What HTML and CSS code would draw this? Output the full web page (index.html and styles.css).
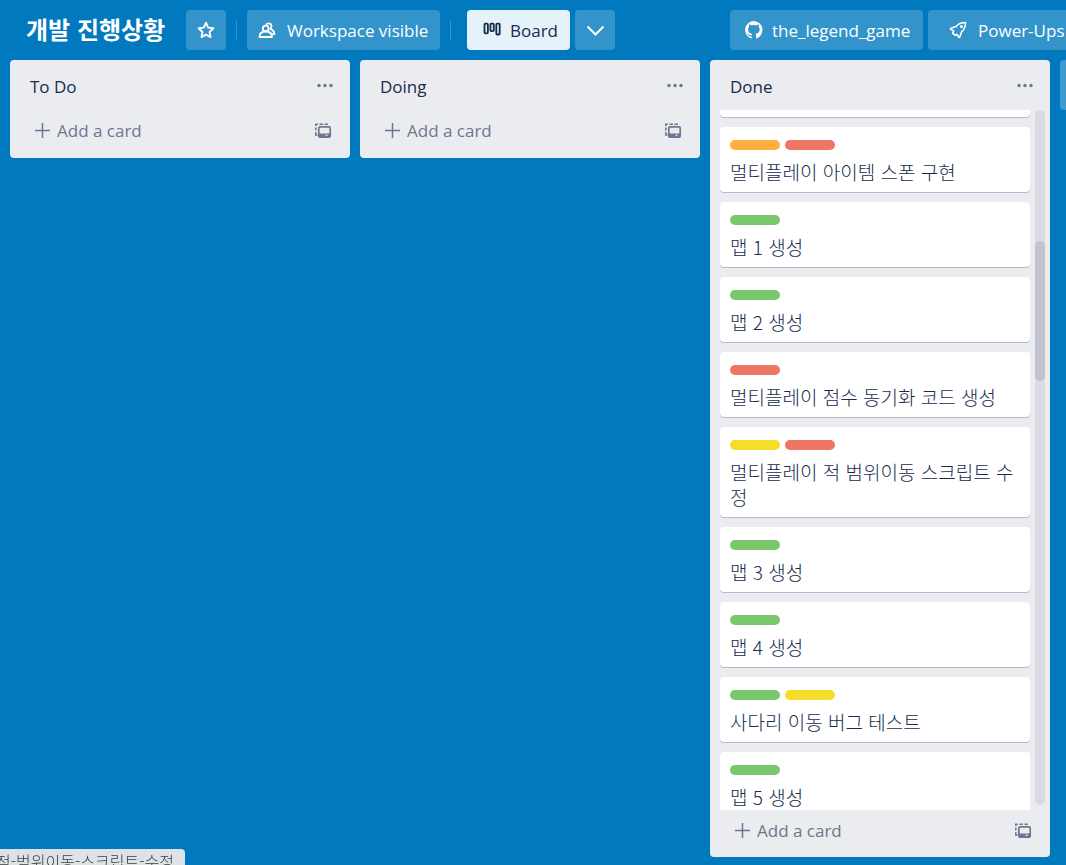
FILE: index.html
```html
<!DOCTYPE html>
<html lang="ko">
<head>
<meta charset="utf-8">
<meta name="viewport" content="width=device-width, initial-scale=1">
<title>개발 진행상황</title>
<link rel="stylesheet" href="styles.css">
</head>
<body>
<svg class="sprite" aria-hidden="true">
  <symbol id="dots" viewBox="0 0 20 20"><circle cx="4" cy="9.500" r="1.700"/><circle cx="10" cy="9.500" r="1.700"/><circle cx="16" cy="9.500" r="1.700"/></symbol>
  <symbol id="plus" viewBox="0 0 20 20"><path d="M10.500 2v15M3 9.500h15" fill="none" stroke="currentColor" stroke-width="1.500"/></symbol>
  <symbol id="template" viewBox="0 0 20 20">
    <path d="M2.800 5V3.200h2M6.500 3.200h3.500M11.500 3.200H15M2.800 6.500v3M2.800 11v3h1.700" fill="none" stroke="currentColor" stroke-width="1.500"/>
    <rect x="5.800" y="5.800" width="11.400" height="10.400" rx="1.200" fill="none" stroke="currentColor" stroke-width="1.700"/>
    <path d="M6 12.500h11V16H6z"/><path d="M12.500 14.300h2" stroke="#ebecf0" stroke-width="1.200"/>
  </symbol>
</svg>

<header class="board-header">
  <h1 class="board-title">개발 진행상황</h1>
  <button class="btn btn-icon" aria-label="Star board">
    <svg class="icon" viewBox="0 0 20 20"><path d="M10 2.700l2.200 4.900 5.200.7-3.800 3.700.9 5.100L10 14.700l-4.500 2.400.9-5.100L2.600 8.300l5.200-.7z" fill="none" stroke="currentColor" stroke-width="1.900" stroke-linejoin="round"/></svg>
  </button>
  <span class="divider"></span>
  <button class="btn btn-visibility">
    <svg class="icon" viewBox="0 0 20 20" fill="none" stroke="currentColor" stroke-width="1.800" stroke-linejoin="round"><circle cx="8.700" cy="8.500" r="2.900"/><path d="M2.500 17c0-3.300 2.400-5.500 6.200-5.500s6.200 2.200 6.200 5.500z"/><path d="M9 4.800c.6-1.100 1.600-1.500 2.500-1.500 1.800 0 3 1.300 3 2.900 0 1.200-.6 2.100-1.400 2.600 2.500.8 4.300 2.600 4.300 5.400h-2.600"/></svg>
    <span>Workspace visible</span>
  </button>
  <span class="divider"></span>
  <div class="views">
    <button class="btn btn-board">
      <svg class="icon" viewBox="0 0 20 20" fill="none" stroke="currentColor" stroke-width="1.800"><rect x="2.500" y="3.700" width="3.400" height="9.600" rx="1"/><rect x="8.400" y="3.700" width="3.400" height="7.400" rx="1"/><rect x="14.300" y="3.700" width="3.400" height="10.800" rx="1"/></svg>
      <span>Board</span>
    </button>
    <button class="btn btn-icon" aria-label="Views">
      <svg class="icon" viewBox="0 0 20 20"><path d="M2.500 6.500l8 8 8-8" fill="none" stroke="currentColor" stroke-width="2"/></svg>
    </button>
  </div>
  <div class="tools">
    <button class="btn btn-repo">
      <svg class="icon" viewBox="0 0 16 16" fill="currentColor"><path d="M8 .8a7.200 7.200 0 0 0-2.300 14c.4.100.5-.2.500-.4v-1.300c-2 .4-2.500-.9-2.500-.9-.3-.8-.8-1.100-.8-1.100-.7-.4 0-.4 0-.4.700 0 1.100.7 1.100.7.700 1.100 1.700.8 2.100.6.100-.5.300-.8.500-1-1.600-.2-3.300-.8-3.300-3.600 0-.8.300-1.400.7-1.900 0-.200-.3-.9.100-1.900 0 0 .6-.2 2 .7a7 7 0 0 1 3.600 0c1.400-.9 2-.7 2-.7.400 1 .1 1.700.1 1.900.5.500.7 1.100.7 1.900 0 2.800-1.700 3.400-3.300 3.600.3.200.5.700.5 1.300v2c0 .2.100.5.500.4A7.200 7.200 0 0 0 8 .8z"/></svg>
      <span>the_legend_game</span>
    </button>
    <button class="btn btn-power">
      <svg class="icon" viewBox="0 0 20 20" fill="none" stroke="currentColor" stroke-width="1.600" stroke-linejoin="round" stroke-linecap="round"><path d="M17.500 2.500c-4.300 0-7.200 1.200-9.400 4L3 8.200c-.7.300-.7.900-.2 1.200l2.900 1.500-1 2.200 2.200 2.200 2.200-1 1.600 2.900c.3.500.9.500 1.100-.1l1.700-5.200c2.800-2.200 4-5.100 4-9.400z"/><circle cx="13.400" cy="6.600" r=".7"/></svg>
      <span>Power-Ups</span>
    </button>
  </div>
</header>

<main class="board">
  <section class="list">
    <div class="list-head"><h2>To Do</h2><button class="ghost" aria-label="List actions"><svg class="icon"><use href="#dots"/></svg></button></div>
    <div class="list-foot"><button class="add"><svg class="icon"><use href="#plus"/></svg><span>Add a card</span></button><button class="ghost" aria-label="Create from template"><svg class="icon"><use href="#template"/></svg></button></div>
  </section>
  <section class="list">
    <div class="list-head"><h2>Doing</h2><button class="ghost" aria-label="List actions"><svg class="icon"><use href="#dots"/></svg></button></div>
    <div class="list-foot"><button class="add"><svg class="icon"><use href="#plus"/></svg><span>Add a card</span></button><button class="ghost" aria-label="Create from template"><svg class="icon"><use href="#template"/></svg></button></div>
  </section>
  <section class="list list-full">
    <div class="list-head"><h2>Done</h2><button class="ghost" aria-label="List actions"><svg class="icon"><use href="#dots"/></svg></button></div>
    <div class="list-body">
      <div class="cards">
        <article class="card card-tail"></article>
        <article class="card"><div class="labels"><i class="label orange"></i><i class="label red"></i></div><p>멀티플레이 아이템 스폰 구현</p></article>
        <article class="card"><div class="labels"><i class="label green"></i></div><p>맵 1 생성</p></article>
        <article class="card"><div class="labels"><i class="label green"></i></div><p>맵 2 생성</p></article>
        <article class="card"><div class="labels"><i class="label red"></i></div><p>멀티플레이 점수 동기화 코드 생성</p></article>
        <article class="card"><div class="labels"><i class="label yellow"></i><i class="label red"></i></div><p>멀티플레이 적 범위이동 스크립트 수정</p></article>
        <article class="card"><div class="labels"><i class="label green"></i></div><p>맵 3 생성</p></article>
        <article class="card"><div class="labels"><i class="label green"></i></div><p>맵 4 생성</p></article>
        <article class="card"><div class="labels"><i class="label green"></i><i class="label yellow"></i></div><p>사다리 이동 버그 테스트</p></article>
        <article class="card"><div class="labels"><i class="label green"></i></div><p>맵 5 생성</p></article>
      </div>
      <div class="track" aria-hidden="true"><div class="thumb"></div></div>
    </div>
    <div class="list-foot"><button class="add"><svg class="icon"><use href="#plus"/></svg><span>Add a card</span></button><button class="ghost" aria-label="Create from template"><svg class="icon"><use href="#template"/></svg></button></div>
  </section>
  <button class="add-list" aria-label="Add another list"></button>
</main>
<div class="status">적-범위이동-스크립트-수정</div>
</body>
</html>
```

FILE: styles.css
```css
* {
  box-sizing: border-box;
}

body {
  margin: 0;
  height: 100vh;
  display: flex;
  flex-direction: column;
  overflow: hidden;
  background: #0079bf;
  color: #172b4d;
  font-family: "Open Sans", "Noto Sans CJK KR", sans-serif;
  font-size: 17px;
  line-height: 25px;
}

h1, h2, p {
  margin: 0;
}

button {
  border: 0;
  padding: 0;
  background: none;
  font: inherit;
  color: inherit;
  display: flex;
  align-items: center;
  cursor: pointer;
}

.sprite {
  display: none;
}

.icon {
  width: 20px;
  height: 20px;
  flex: none;
  fill: currentColor;
}

svg.icon[fill="none"] {
  fill: none;
}

.board-header {
  flex: none;
  display: flex;
  align-items: center;
  height: 60px;
  padding-left: 26px;
  color: #fff;
  white-space: nowrap;
}

.board-title {
  width: 160px;
  flex: none;
  font-family: "Noto Sans CJK KR", sans-serif;
  font-size: 24px;
  font-weight: 700;
  line-height: 38px;
  padding-bottom: 2px;
}

.btn {
  flex: none;
  height: 40px;
  border-radius: 4px;
  background: #3394cc;
}

.btn-icon {
  width: 40px;
  justify-content: center;
}

.divider {
  flex: none;
  width: 1px;
  height: 20px;
  margin: 0 10px;
  background: #3394cc;
}

.btn-visibility {
  width: 193px;
  padding-left: 10px;
  gap: 10px;
}

.views,
.tools {
  display: flex;
  gap: 5px;
}

.views {
  margin-left: 6px;
}

.btn-board {
  width: 103px;
  padding-left: 15px;
  gap: 8px;
  background: #e6f2f9;
  color: #172b4d;
}

.tools {
  margin-left: 115px;
}

.btn-repo {
  width: 193px;
  padding-left: 14px;
  gap: 8px;
}

.btn-power {
  width: 150px;
  padding-left: 20px;
  gap: 10px;
}

.board {
  flex: 1;
  min-height: 0;
  display: flex;
  align-items: flex-start;
  gap: 10px;
  padding: 0 10px 8px;
}

.list {
  flex: none;
  width: 340px;
  max-height: 100%;
  display: flex;
  flex-direction: column;
  border-radius: 4px;
  background: #ebecf0;
}

.list-full {
  height: 100%;
}

.list-head {
  flex: none;
  display: flex;
  justify-content: space-between;
  align-items: center;
  height: 50px;
  padding: 2px 15px 0 20px;
}

.list-head h2 {
  font-size: 17px;
  font-weight: 500;
}

.ghost,
.add {
  color: #6b778c;
}

.add {
  gap: 5px;
}

.list-foot {
  flex: none;
  display: flex;
  justify-content: space-between;
  align-items: flex-start;
  height: 48px;
  padding: 8px 17px 0 22px;
}

.list-foot .ghost {
  height: 25px;
}

.list-body {
  flex: 1;
  min-height: 0;
  display: flex;
  gap: 5px;
  padding: 0 5px 0 10px;
}

.list-full .list-foot {
  height: 47px;
}

.cards {
  flex: 1;
  min-width: 0;
  overflow: hidden;
}

.card {
  min-height: 65px;
  margin-bottom: 10px;
  padding: 13px 10px 8px;
  border-radius: 4px;
  background: #fff;
  box-shadow: 0 1px 0 #b3b9c6;
}

.card-tail {
  min-height: 7px;
  height: 7px;
  padding: 0;
  border-radius: 0 0 4px 4px;
}

.card p {
  font-family: "Noto Sans CJK KR", sans-serif;
  font-size: 19px;
  font-weight: 300;
  line-height: 25px;
}

.labels {
  display: flex;
  gap: 5px;
  height: 10px;
  margin-bottom: 9px;
}

.label {
  width: 50px;
  border-radius: 5px;
}

.green { background: #7bc86c; }
.yellow { background: #f5dd29; }
.orange { background: #ffaf3f; }
.red { background: #ef7564; }

.track {
  width: 10px;
  margin-bottom: 5px;
  display: grid;
  grid-template-rows: 131fr 140fr 424fr;
  border-radius: 5px;
  background: #dadbe2;
}

.thumb {
  grid-row: 2;
  border-radius: 5px;
  background: #c1c4d0;
}

.add-list {
  flex: none;
  width: 340px;
  height: 50px;
  border-radius: 4px;
  background: #4099cf;
}

.status {
  position: fixed;
  left: 0;
  bottom: -8px;
  width: 185px;
  height: 24px;
  padding-right: 11px;
  display: flex;
  justify-content: flex-end;
  overflow: hidden;
  border-radius: 0 4px 0 0;
  background: #dee1e6;
  color: #3c4043;
  font-family: "Noto Sans CJK KR", sans-serif;
  font-size: 16px;
  font-weight: 300;
  line-height: 24px;
  white-space: nowrap;
}
```
